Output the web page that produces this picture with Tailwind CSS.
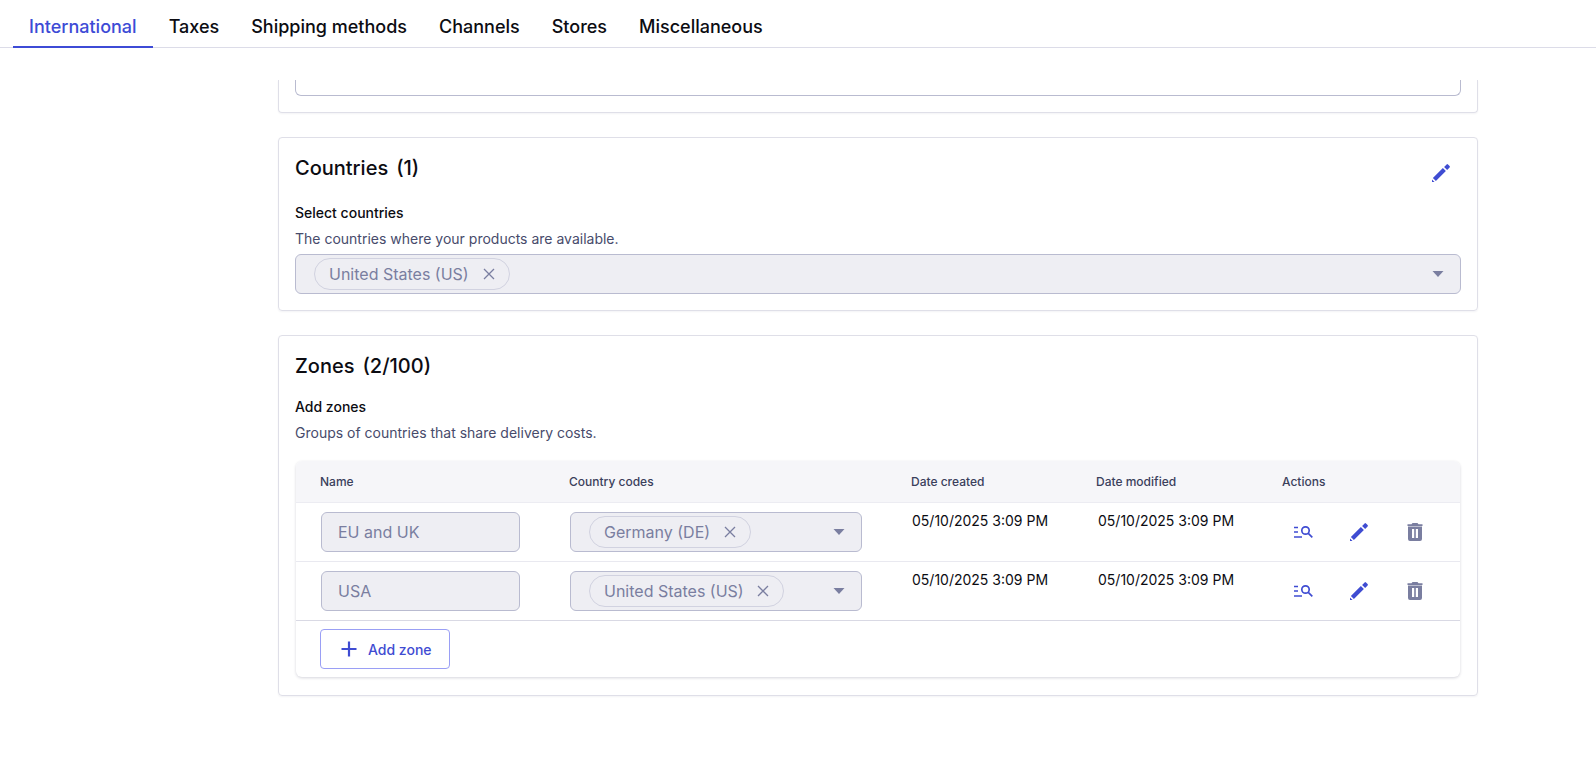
<!DOCTYPE html>
<html><head><meta charset="utf-8"><script src="https://cdn.jsdelivr.net/npm/@tailwindcss/browser@4"></script></head>
<body class="bg-white font-['Inter',sans-serif] text-[#0c0c12] overflow-hidden">
<div class="w-[1596px] h-[768px] flex flex-col">
<nav class="h-[48px] border-b border-[#dcdce8] flex pl-[13px] text-[18px] font-medium leading-[54px] shrink-0">
  <a class="px-4 text-[#3d4bd6] border-b-2 border-[#3d4bd6] h-[48px]">International</a>
  <a class="px-4">Taxes</a><a class="px-4">Shipping methods</a><a class="px-4">Channels</a><a class="px-4">Stores</a><a class="px-4">Miscellaneous</a>
</nav>
<main class="pl-[278px] pt-[32px] w-[1478px] flex flex-col">
  <section class="h-[33px] border-x border-b border-[#dfdfe8] rounded-b px-4 shadow-[0_1px_2px_rgba(20,20,60,0.05)]">
    <div class="h-[16px] border-x border-b border-[#b9bbd0] rounded-b-md"></div>
  </section>
  <section class="mt-[24px] h-[174px] border border-[#dfdfe8] rounded px-4 relative shadow-[0_1px_2px_rgba(20,20,60,0.05)]">
    <h2 class="text-[20px] font-medium leading-[28px] mt-[16px] flex gap-[8px]"><span>Countries</span><span>(1)</span></h2>
    <svg class="absolute right-[24px] top-[23px] w-6 h-6 text-[#3f4cd2]" viewBox="0 0 24 24" fill="currentColor"><path d="M3 21v-2.600L5.600 21zM3.900 17.100l3 3L16.900 10.100l-3-3zM15.100 5.900l3 3 2.500-2.500a1 1 0 0 0 0-1.400l-1.600-1.600a1 1 0 0 0-1.400 0z"/></svg>
    <div class="text-[14px] font-medium leading-[20px] mt-[21px]">Select countries</div>
    <div class="text-[14px] text-[#474b6b] leading-[20px] mt-[6px]">The countries where your products are available.</div>
    <div class="mt-[5px] h-[40px] bg-[#eeeef3] border border-[#b9bbd0] rounded-md flex items-center pl-[18px] pr-[16px] justify-between">
      <span class="h-[32px] flex items-center rounded-full border border-[#d1d2e0] pl-[14px] pr-[13px] gap-[13px] text-[16px] text-[#7a7ea0]">United States (US)<svg class="w-[14px] h-[14px]" viewBox="0 0 14 14" fill="none" stroke="currentColor" stroke-width="1.3"><path d="M2 2l10 10M12 2L2 12"/></svg></span>
      <svg class="w-[12px] h-[6px] text-[#7a7ea0]" viewBox="0 0 12 6" fill="currentColor"><path d="M0.5 0h11L6 6z"/></svg>
    </div>
  </section>
  <section class="mt-[24px] h-[361px] border border-[#dfdfe8] rounded px-4 shadow-[0_1px_2px_rgba(20,20,60,0.05)]">
    <h2 class="text-[20px] font-medium leading-[28px] mt-[16px] flex gap-[8px]"><span>Zones</span><span>(2/100)</span></h2>
    <div class="text-[14px] font-medium leading-[20px] mt-[17px]">Add zones</div>
    <div class="text-[14px] text-[#474b6b] leading-[20px] mt-[6px]">Groups of countries that share delivery costs.</div>
    <div class="mt-[18px] mx-[1px] rounded-md shadow-[0_1px_3px_rgba(20,20,60,0.18)] bg-white">
      <div class="h-[42px] bg-[#f6f6f9] rounded-t-md grid grid-cols-[249px_366px_185px_186px_1fr] items-center text-[12px] font-medium text-[#3b3f5c] border-b border-[#ececf2]">
        <div class="pl-[24px]">Name</div><div class="pl-[24px]">Country codes</div><div class="pl-0">Date created</div><div>Date modified</div><div>Actions</div>
      </div>
      <div class="h-[59px] grid grid-cols-[249px_366px_185px_186px_1fr] border-b border-[#e9e9f0] text-[14px]">
        <div class="pl-[25px] pt-[9px]"><div class="w-[199px] h-[40px] bg-[#eeeef3] border border-[#b9bbd0] rounded-md flex items-center pl-[16px] text-[16px] text-[#7a7ea0]">EU and UK</div></div>
        <div class="pl-[25px] pt-[9px]"><div class="w-[292px] h-[40px] bg-[#eeeef3] border border-[#b9bbd0] rounded-md flex items-center pl-[18px] pr-[16px] justify-between">
          <span class="h-[32px] flex items-center rounded-full border border-[#d1d2e0] pl-[14px] pr-[13px] gap-[13px] text-[16px] text-[#7a7ea0]">Germany (DE)<svg class="w-[14px] h-[14px]" viewBox="0 0 14 14" fill="none" stroke="currentColor" stroke-width="1.3"><path d="M2 2l10 10M12 2L2 12"/></svg></span>
          <svg class="w-[12px] h-[6px] text-[#7a7ea0]" viewBox="0 0 12 6" fill="currentColor"><path d="M0.5 0h11L6 6z"/></svg></div></div>
        <div class="pl-[1px] pt-[8px] leading-[20px]">05/10/2025 3:09 PM</div>
        <div class="pl-[2px] pt-[8px] leading-[20px]">05/10/2025 3:09 PM</div>
        <div class="flex items-start pt-[17px] pl-[9px]">
          <svg class="w-[24px] h-[24px] text-[#3f4cd2]" viewBox="0 0 24 24" fill="none" stroke="currentColor" stroke-width="1.700"><path d="M3 7.500h4M3 12h4M3 17h8"/><circle cx="14.500" cy="10.500" r="3.700"/><path d="M17.300 13.300l4 4"/></svg>
          <svg class="ml-[32px] w-6 h-6 text-[#3f4cd2]" viewBox="0 0 24 24" fill="currentColor"><path d="M3 21v-2.600L5.600 21zM3.900 17.100l3 3L16.900 10.100l-3-3zM15.100 5.900l3 3 2.500-2.500a1 1 0 0 0 0-1.400l-1.600-1.600a1 1 0 0 0-1.400 0z"/></svg>
          <svg class="ml-[32px] w-6 h-6 text-[#7a7ea0]" viewBox="0 0 24 24" fill="currentColor"><path fill-rule="evenodd" d="M9.500 3h5l1 1.200h4v1.800h-15V4.200h4zM5 6.500h14V19a2 2 0 0 1-2 2H7a2 2 0 0 1-2-2zM9 9v9h2.200V9zM12.800 9v9H15V9z"/></svg>
        </div>
      </div>
      <div class="h-[59px] grid grid-cols-[249px_366px_185px_186px_1fr] border-b border-[#d9d9e4] text-[14px]">
        <div class="pl-[25px] pt-[9px]"><div class="w-[199px] h-[40px] bg-[#eeeef3] border border-[#b9bbd0] rounded-md flex items-center pl-[16px] text-[16px] text-[#7a7ea0]">USA</div></div>
        <div class="pl-[25px] pt-[9px]"><div class="w-[292px] h-[40px] bg-[#eeeef3] border border-[#b9bbd0] rounded-md flex items-center pl-[18px] pr-[16px] justify-between">
          <span class="h-[32px] flex items-center rounded-full border border-[#d1d2e0] pl-[14px] pr-[13px] gap-[12px] text-[16px] text-[#7a7ea0]">United States (US)<svg class="w-[14px] h-[14px]" viewBox="0 0 14 14" fill="none" stroke="currentColor" stroke-width="1.3"><path d="M2 2l10 10M12 2L2 12"/></svg></span>
          <svg class="w-[12px] h-[6px] text-[#7a7ea0]" viewBox="0 0 12 6" fill="currentColor"><path d="M0.5 0h11L6 6z"/></svg></div></div>
        <div class="pl-[1px] pt-[8px] leading-[20px]">05/10/2025 3:09 PM</div>
        <div class="pl-[2px] pt-[8px] leading-[20px]">05/10/2025 3:09 PM</div>
        <div class="flex items-start pt-[17px] pl-[9px]">
          <svg class="w-[24px] h-[24px] text-[#3f4cd2]" viewBox="0 0 24 24" fill="none" stroke="currentColor" stroke-width="1.700"><path d="M3 7.500h4M3 12h4M3 17h8"/><circle cx="14.500" cy="10.500" r="3.700"/><path d="M17.300 13.300l4 4"/></svg>
          <svg class="ml-[32px] w-6 h-6 text-[#3f4cd2]" viewBox="0 0 24 24" fill="currentColor"><path d="M3 21v-2.600L5.600 21zM3.900 17.100l3 3L16.900 10.100l-3-3zM15.100 5.900l3 3 2.500-2.500a1 1 0 0 0 0-1.400l-1.600-1.600a1 1 0 0 0-1.400 0z"/></svg>
          <svg class="ml-[32px] w-6 h-6 text-[#7a7ea0]" viewBox="0 0 24 24" fill="currentColor"><path fill-rule="evenodd" d="M9.500 3h5l1 1.200h4v1.800h-15V4.200h4zM5 6.500h14V19a2 2 0 0 1-2 2H7a2 2 0 0 1-2-2zM9 9v9h2.200V9zM12.800 9v9H15V9z"/></svg>
        </div>
      </div>
      <div class="h-[56px] pl-[24px] pt-[8px]">
        <button class="w-[130px] h-[40px] border border-[#9a9ff5] rounded flex items-center pl-[18px] gap-[9px] text-[14px] font-medium text-[#3f4cd2]"><svg class="w-[20px] h-[20px]" viewBox="0 0 20 20" fill="none" stroke="currentColor" stroke-width="2.200"><path d="M10 2.500v15M2.500 10h15"/></svg>Add zone</button>
      </div>
    </div>
  </section>
</main>
</div>
</body></html>
